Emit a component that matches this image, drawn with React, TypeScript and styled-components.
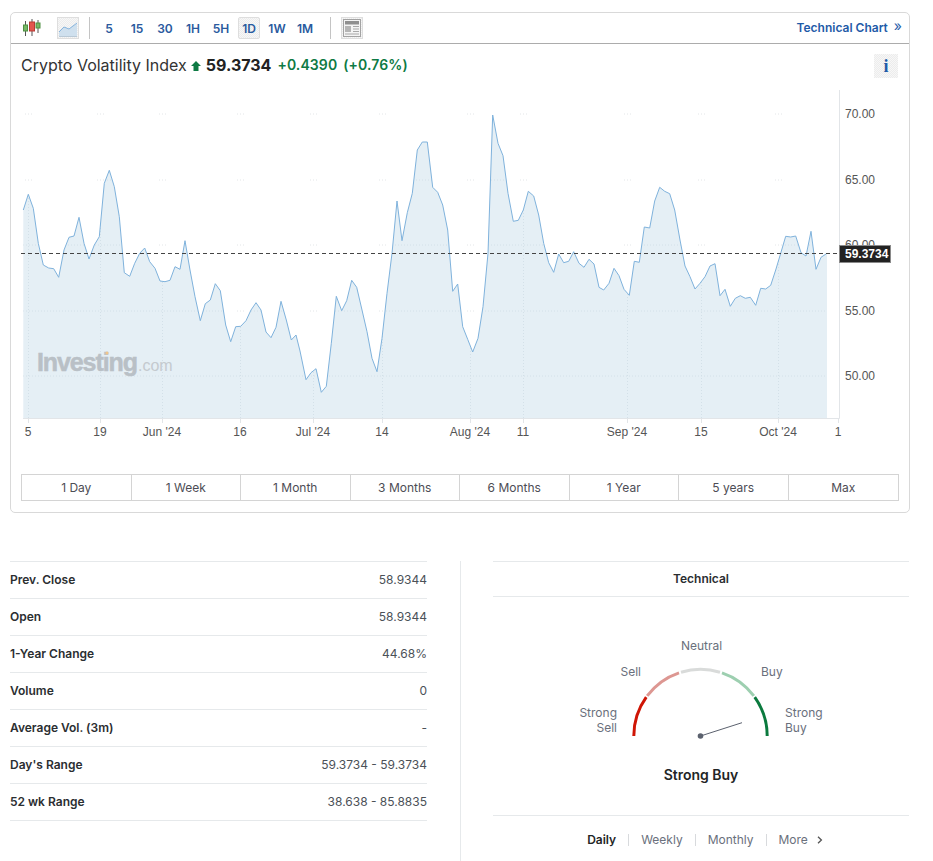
import React from 'react'
import styled, { css, createGlobalStyle } from 'styled-components'

const GlobalStyle = createGlobalStyle`
  html, body {
    margin: 0;
    padding: 0;
    background: #fff;
    overflow: hidden;
  }
  body {
    font-family: Inter, "Liberation Sans", sans-serif;
    color: #181c21;
  }
`

const dotted = css`
  background: repeating-conic-gradient(#ececec 0 25%, #f7f7f7 0 50%) 0 0 / 2px 2px;
`

const Page = styled.div`
  width: 933px;
  height: 861px;
  padding: 12px 0 0 10px;
  box-sizing: border-box;
  overflow: hidden;
`

const Card = styled.section`
  width: 900px;
  height: 501px;
  box-sizing: border-box;
  border: 1px solid #d9d9d9;
  border-radius: 5px;
  display: flex;
  flex-direction: column;
`

const Toolbar = styled.div`
  height: 30px;
  border-bottom: 1px solid #acacac;
  display: flex;
  align-items: center;
  padding: 0 7px 0 10px;
  flex: none;
`

const IconSlot = styled.span<{ $boxed?: boolean; $gap?: number }>`
  width: 22px;
  height: 22px;
  box-sizing: border-box;
  display: flex;
  align-items: center;
  justify-content: center;
  margin-right: ${p => p.$gap ?? 0}px;
  border: 1px solid ${p => (p.$boxed ? '#dedede' : 'transparent')};
  ${p => p.$boxed && dotted}
`

const ToolSep = styled.span<{ $left: number; $right: number }>`
  width: 1px;
  height: 22px;
  background: #c4c4c4;
  margin: 0 ${p => p.$right}px 0 ${p => p.$left}px;
`

const Interval = styled.span<{ $active?: boolean }>`
  height: 22px;
  min-width: 22px;
  box-sizing: border-box;
  display: flex;
  align-items: center;
  justify-content: center;
  margin-right: 6px;
  font-size: 12px;
  font-weight: 600;
  color: #2a5a9e;
  border: 1px solid ${p => (p.$active ? '#dedede' : 'transparent')};
  border-radius: 2px;
  ${p => p.$active && dotted}
`

const ChartLink = styled.a`
  margin-left: auto;
  margin-top: -2px;
  font-size: 12px;
  font-weight: 600;
  color: #1f5ba8;
  display: flex;
  align-items: center;
  gap: 6px;
`

const LinkArrows = styled.span`
  font-weight: 400;
  font-size: 14px;
  line-height: 12px;
  margin-top: -2px;
`

const TitleRow = styled.div`
  height: 46px;
  flex: none;
  box-sizing: border-box;
  padding: 11px 11px 0 10px;
  display: flex;
  align-items: flex-start;
`

const IndexName = styled.h1`
  margin: 0;
  font-size: 16px;
  line-height: 20px;
  font-weight: 400;
  color: #333;
`

const UpArrow = styled.svg`
  margin: 6px 5px 0 4px;
`

const LastPrice = styled.span`
  font-size: 16px;
  line-height: 20px;
  font-weight: 700;
  color: #222;
  margin-right: 6px;
`

const Change = styled.span`
  font-size: 14px;
  line-height: 20px;
  font-weight: 600;
  letter-spacing: 0.1px;
  color: #0e7a44;
  margin-right: 6px;
`

const InfoButton = styled.span`
  margin-left: auto;
  width: 24px;
  height: 24px;
  margin-top: -1px;
  color: #1f5ba8;
  font-family: "Liberation Serif", serif;
  font-weight: 700;
  font-size: 18px;
  display: flex;
  align-items: center;
  justify-content: center;
  ${dotted}
`

const ChartSvg = styled.svg`
  display: block;
  flex: none;
  font-family: "Liberation Sans", sans-serif;
  font-size: 12px;
`

const Ranges = styled.div`
  margin: 34px 10px 0;
  height: 27px;
  box-sizing: border-box;
  border: 1px solid #d4d4d4;
  display: grid;
  grid-template-columns: repeat(8, 1fr);
  flex: none;
`

const RangeCell = styled.span`
  display: flex;
  align-items: center;
  justify-content: center;
  font-size: 12px;
  color: #4d4d55;
  border-right: 1px solid #d4d4d4;
  &:last-child {
    border-right: none;
  }
`

const Lower = styled.div`
  display: flex;
  margin-top: 48px;
`

const StatsTable = styled.div`
  width: 417px;
  border-top: 1px solid #e6e9eb;
  flex: none;
`

const StatRow = styled.div`
  height: 37px;
  box-sizing: border-box;
  padding-bottom: 2px;
  border-bottom: 1px solid #e6e9eb;
  display: flex;
  align-items: center;
  justify-content: space-between;
  font-size: 12px;
`

const StatLabel = styled.span`
  font-weight: 600;
  color: #2b2e31;
`

const StatValue = styled.span`
  color: #4b5158;
`

const Divider = styled.div`
  width: 1px;
  height: 300px;
  background: #e6e9eb;
  margin: 0 32px 0 33px;
  flex: none;
`

const TechPanel = styled.div`
  width: 416px;
  flex: none;
  display: flex;
  flex-direction: column;
  align-items: center;
`

const TechHead = styled.div`
  width: 100%;
  height: 36px;
  box-sizing: border-box;
  padding-bottom: 2px;
  border-top: 1px solid #e6e9eb;
  border-bottom: 1px solid #e6e9eb;
  display: flex;
  align-items: center;
  justify-content: center;
  font-size: 12px;
  font-weight: 600;
  color: #2b2e31;
`

const GaugeSvg = styled.svg`
  display: block;
  margin-top: 35px;
  font-size: 12px;
  fill: #6a707c;
`

const Verdict = styled.div`
  font-size: 14px;
  line-height: 20px;
  font-weight: 600;
  color: #232526;
  margin-top: -1px;
`

const PeriodBar = styled.div`
  width: 100%;
  box-sizing: border-box;
  margin-top: 30px;
  border-top: 1px solid #e6e9eb;
  padding: 18px 0 0 7px;
  display: flex;
  justify-content: center;
  align-items: center;
  font-size: 12px;
  line-height: 16px;
  color: #6a707c;
`

const Period = styled.span<{ $active?: boolean }>`
  color: ${p => (p.$active ? '#232526' : '#6a707c')};
  font-weight: ${p => (p.$active ? 600 : 400)};
  padding: 0 12px;
  height: 12px;
  line-height: 12px;
  border-left: 1px solid ${p => (p.$active ? 'transparent' : '#d8dadd')};
  display: flex;
  align-items: center;
  gap: 9px;
`

// points read off the 3x crops, one list per crop
const seg1 = [[70,360],[85,313],[100,355],[115,460],[130,525],[146,534],[161,536],[176,562],[192,480],[207,442],[222,438],[237,382],[252,460],[267,507],[283,465],[298,440],[313,280],[328,241],[343,290],[358,380],[373,548],[389,559],[404,520],[419,490],[434,474],[449,515],[465,535],[480,573],[495,575],[510,571],[525,530],[540,538],[555,452],[570,540],[585,620],[601,692],[616,641],[631,630],[646,581],[661,602],[677,705],[692,755],[707,710],[722,709],[738,692],[753,660],[768,638],[783,660],[798,726],[813,743],[828,712],[843,634],[859,690],[874,750],[888,735]]
const seg2 = [[0,783],[18,869],[33,848],[48,836],[64,907],[79,889],[94,760],[109,619],[125,662],[140,632],[155,571],[170,592],[186,660],[201,725],[216,805],[231,845],[246,745],[261,610],[276,490],[291,333],[306,452],[322,368],[337,310],[352,180],[367,156],[382,156],[398,292],[413,307],[428,345],[443,420],[458,604],[473,582],[488,710],[503,748],[518,786],[534,745],[549,650],[564,490],[578,75],[594,160],[609,197],[624,310],[640,394],[655,391],[670,360],[685,304],[701,318],[716,375],[731,460],[746,518],[761,547],[776,492],[791,518],[806,514],[821,485],[837,520],[852,532],[867,508],[882,522],[897,592]]
const seg3 = [[11,600],[27,580],[42,535],[57,557],[72,598],[88,616],[103,514],[118,517],[133,411],[149,414],[164,333],[179,292],[194,304],[209,311],[224,360],[240,450],[255,528],[270,560],[285,597],[300,580],[315,560],[330,528],[345,521],[360,617],[375,598],[391,649],[406,625],[421,617],[436,625],[451,622],[467,646],[482,595],[497,597],[512,586],[527,540],[542,490],[557,439],[572,441],[587,438],[603,488],[618,498],[633,424],[648,538],[663,502],[678,492]]

const toPoints = (seg: number[][], offset: number) =>
  seg.map(([x, y]) => `${(offset + x / 3).toFixed(1)},${(90 + y / 3).toFixed(1)}`)

const line = [...toPoints(seg1, 0), ...toPoints(seg2, 300), ...toPoints(seg3, 600)]
const linePath = line.join(' ')
const areaPath = `23.3,418 ${linePath} 827,254 827,418`

const xLabels: [number, string][] = [
  [28, '5'], [100, '19'], [162, "Jun '24"], [240, '16'], [313, "Jul '24"], [382, '14'],
  [470, "Aug '24"], [523, '11'], [627, "Sep '24"], [701, '15'], [778, "Oct '24"],
]
const yLabels: [number, string][] = [
  [114, '70.00'], [180, '65.00'], [245, '60.00'], [311, '55.00'], [376, '50.00'],
]

const PriceChart = () => (
  <ChartSvg width={898} height={350} viewBox="11 90 898 350">
    <defs>
      <clipPath id="area-clip">
        <polygon points={areaPath} />
      </clipPath>
    </defs>
    {yLabels.flatMap(([y]) =>
      xLabels.map(([x]) => (
        <line key={`${x}-${y}`} x1={x - 3} x2={x + 4} y1={y} y2={y} stroke="#e3e6e8" strokeDasharray="1 2" />
      ))
    )}
    <polygon points={areaPath} fill="#e5eff5" />
    <g clipPath="url(#area-clip)" stroke="#d3e0e8" strokeDasharray="1 2">
      {yLabels.map(([y]) => (
        <line key={y} x1={23} x2={827} y1={y} y2={y} />
      ))}
      {xLabels.map(([x]) => (
        <line key={x} x1={x + 0.5} x2={x + 0.5} y1={114} y2={418} />
      ))}
    </g>
    <polyline points={linePath} fill="none" stroke="#7fb2dc" strokeWidth={1} />
    <path d="M839.5 90V418.5H23" fill="none" stroke="#e2e5e8" />
    {xLabels.map(([x]) => (
      <line key={x} x1={x + 0.5} x2={x + 0.5} y1={418} y2={423} stroke="#e2e5e8" />
    ))}
    <line x1={838.5} x2={838.5} y1={418} y2={423} stroke="#e2e5e8" />
    <text x={37} y={371} fontSize={25} fontWeight={700} letterSpacing={-1.1} fill="#b9c0c6" stroke="#b9c0c6" strokeWidth={0.5}>
      Investing
    </text>
    <text x={138} y={371} fontSize={16} fill="#c4cacf">.com</text>
    <circle cx={107} cy={353} r={1.6} fill="#f0c58c" />
    {xLabels.map(([x, t]) => (
      <text key={t} x={x} y={436} textAnchor="middle" fill="#555">{t}</text>
    ))}
    <text x={838} y={436} textAnchor="middle" fill="#555">1</text>
    {yLabels.map(([y, t]) => (
      <text key={t} x={845} y={y + 4} fill="#555">{t}</text>
    ))}
    <line x1={21} x2={839} y1={253.5} y2={253.5} stroke="#444" strokeDasharray="4 3" />
    <rect x={839.5} y={245.5} width={51} height={17} fill="#222" stroke="#8a8a8a" />
    <text x={845} y={258} fill="#fff" fontWeight={700}>59.3734</text>
  </ChartSvg>
)

const CandleIcon = () => (
  <svg width="18" height="18" viewBox="0 0 18 18">
    <path d="M2.5 2v15M9 0v17M15 1v13" stroke="#555" />
    <rect x="0.5" y="6" width="4" height="6" fill="#76b866" stroke="#4f8f42" />
    <rect x="6.5" y="3" width="5" height="9" fill="#e2564f" stroke="#b93a34" />
    <rect x="13" y="4" width="4" height="5" fill="#76b866" stroke="#4f8f42" />
  </svg>
)

const AreaIcon = () => (
  <svg width="20" height="20" viewBox="0 0 20 20">
    <path d="M1 14L6 9L11 11L19 5V18H1Z" fill="#cfe0ee" />
    <path d="M1 14L6 9L11 11L19 5" fill="none" stroke="#87b4dd" />
    <path d="M1 18.5H19" stroke="#b9c9d6" />
  </svg>
)

const NewsIcon = () => (
  <svg width="18" height="18" viewBox="0 0 18 18">
    <rect x="0.5" y="0.5" width="17" height="17" fill="#f4f4f4" stroke="#a3a3a3" />
    <rect x="2" y="2" width="14" height="3.5" fill="#8f8f8f" />
    <rect x="2" y="7" width="6" height="6" fill="#b5b5b5" />
    <path d="M10 7.5H16M10 10H16M10 12.5H16M2 15H16" stroke="#a8a8a8" />
  </svg>
)

const GAUGE_CX = 68.5
const GAUGE_CY = 104
const GAUGE_R = 66.7

// angle is the elevation from the left end of the dial, 0 to 180
const dialPoint = (deg: number) => {
  const rad = (deg * Math.PI) / 180
  return `${(GAUGE_CX - GAUGE_R * Math.cos(rad)).toFixed(2)} ${(GAUGE_CY - GAUGE_R * Math.sin(rad)).toFixed(2)}`
}

const dialArc = (from: number, to: number) =>
  `M${dialPoint(from)} A${GAUGE_R} ${GAUGE_R} 0 0 1 ${dialPoint(to)}`

const gaugeArcs: [number, number, string][] = [
  [0, 35.6, '#cf1505'],
  [36.9, 71.2, '#dd9792'],
  [73, 107, '#d9dbda'],
  [108.8, 143.1, '#9dcfb0'],
  [144.4, 180, '#0b7a3e'],
]

const Gauge = () => (
  <GaugeSvg width={260} height={134} viewBox="-61 0 260 134">
    <text x={69.5} y={18} textAnchor="middle">Neutral</text>
    <text x={9} y={44} textAnchor="end">Sell</text>
    <text x={129} y={44}>Buy</text>
    <text x={-15} y={85} textAnchor="end">Strong</text>
    <text x={-15} y={100} textAnchor="end">Sell</text>
    <text x={153} y={85}>Strong</text>
    <text x={153} y={100}>Buy</text>
    {gaugeArcs.map(([from, to, color]) => (
      <path key={color} d={dialArc(from, to)} fill="none" stroke={color} strokeWidth={3} />
    ))}
    <line x1={GAUGE_CX} y1={GAUGE_CY} x2={110} y2={90.7} stroke="#5b616e" strokeWidth={1} />
    <circle cx={GAUGE_CX} cy={GAUGE_CY} r={2.8} fill="#5b616e" />
  </GaugeSvg>
)

const stats = [
  ['Prev. Close', '58.9344'],
  ['Open', '58.9344'],
  ['1-Year Change', '44.68%'],
  ['Volume', '0'],
  ['Average Vol. (3m)', '-'],
  ["Day's Range", '59.3734 - 59.3734'],
  ['52 wk Range', '38.638 - 85.8835'],
]

const intervals = ['5', '15', '30', '1H', '5H', '1D', '1W', '1M']
const ranges = ['1 Day', '1 Week', '1 Month', '3 Months', '6 Months', '1 Year', '5 years', 'Max']

export default function App() {
  return (
    <Page>
      <GlobalStyle />
      <Card>
        <Toolbar>
          <IconSlot $gap={14}><CandleIcon /></IconSlot>
          <IconSlot $boxed><AreaIcon /></IconSlot>
          <ToolSep $left={10} $right={8} />
          {intervals.map(t => (
            <Interval key={t} $active={t === '1D'}>{t}</Interval>
          ))}
          <ToolSep $left={8} $right={10} />
          <IconSlot $boxed><NewsIcon /></IconSlot>
          <ChartLink>
            Technical Chart <LinkArrows>»</LinkArrows>
          </ChartLink>
        </Toolbar>
        <TitleRow>
          <IndexName>Crypto Volatility Index</IndexName>
          <UpArrow width="10" height="10" viewBox="0 0 10 10">
            <path d="M5 0L10 5H7.5V10H2.5V5H0Z" fill="#0e7a44" />
          </UpArrow>
          <LastPrice>59.3734</LastPrice>
          <Change>+0.4390</Change>
          <Change>(+0.76%)</Change>
          <InfoButton>i</InfoButton>
        </TitleRow>
        <PriceChart />
        <Ranges>
          {ranges.map(r => (
            <RangeCell key={r}>{r}</RangeCell>
          ))}
        </Ranges>
      </Card>
      <Lower>
        <StatsTable>
          {stats.map(([label, value]) => (
            <StatRow key={label}>
              <StatLabel>{label}</StatLabel>
              <StatValue>{value}</StatValue>
            </StatRow>
          ))}
        </StatsTable>
        <Divider />
        <TechPanel>
          <TechHead>Technical</TechHead>
          <Gauge />
          <Verdict>Strong Buy</Verdict>
          <PeriodBar>
            <Period $active>Daily</Period>
            <Period>Weekly</Period>
            <Period>Monthly</Period>
            <Period>
              More
              <svg width="6" height="8" viewBox="0 0 6 8">
                <path d="M1 0.8L4.4 4L1 7.2" fill="none" stroke="#555" strokeWidth="1.3" />
              </svg>
            </Period>
          </PeriodBar>
        </TechPanel>
      </Lower>
    </Page>
  )
}
